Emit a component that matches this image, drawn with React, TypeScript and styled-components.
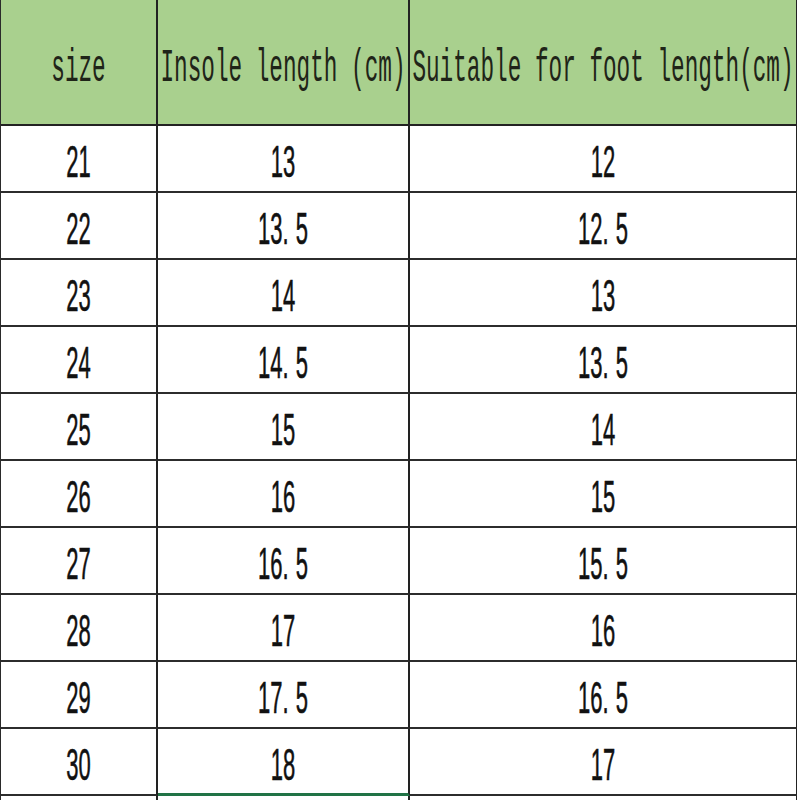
import styled, { createGlobalStyle } from "styled-components"

const GlobalStyle = createGlobalStyle`
    html, body {
        margin: 0;
        padding: 0;
        background: #fff;
        overflow: hidden;
    }
`

const rows = [
    ['21', '13', '12'],
    ['22', '13.5', '12.5'],
    ['23', '14', '13'],
    ['24', '14.5', '13.5'],
    ['25', '15', '14'],
    ['26', '16', '15'],
    ['27', '16.5', '15.5'],
    ['28', '17', '16'],
    ['29', '17.5', '16.5'],
    ['30', '18', '17'],
]

// the sheet font leaves a wide gap after the decimal point
const NumberText = ({ value }: { value: string }) => {
    const [whole, fraction] = value.split('.')
    return (
        <StyledNumber>
            {whole}
            {fraction !== undefined && <><StyledDot>.</StyledDot>{fraction}</>}
        </StyledNumber>
    )
}

export default function App() {
    return (
        <>
            <GlobalStyle />
            <StyledSheet>
                <StyledHeadCell><StyledHeadText>size</StyledHeadText></StyledHeadCell>
                <StyledHeadCell><StyledHeadText>Insole length (cm)</StyledHeadText></StyledHeadCell>
                <StyledHeadCell><StyledHeadText>Suitable for foot length(cm)</StyledHeadText></StyledHeadCell>
                {rows.map((row, i) =>
                    row.map((value, j) => (
                        <StyledCell key={i + '-' + j} selected={i === rows.length - 1 && j === 1}>
                            <NumberText value={value} />
                        </StyledCell>
                    ))
                )}
                <StyledCell />
                <StyledCell />
                <StyledCell />
            </StyledSheet>
        </>
    )
}

const StyledSheet = styled.div`
    display: grid;
    grid-template-columns: 157px 252px 388px;
    grid-template-rows: 126px;
    grid-auto-rows: 67px;
    width: 797px;
    height: 800px;
    overflow: hidden;
    border-left: 1px solid #2a2a2a;
    box-sizing: border-box;
`

const StyledHeadCell = styled.div`
    display: flex;
    align-items: center;
    justify-content: center;
    background: #a9d08e;
    border-right: 2px solid #222;
    border-bottom: 2px solid #222;
    box-sizing: border-box;
    white-space: nowrap;
`

const StyledHeadText = styled.span`
    display: inline-block;
    font-family: "Liberation Mono", monospace;
    font-size: 22.7px;
    color: #1f2418;
    transform: scaleY(2.05);
    margin-top: 14px;
`

const StyledCell = styled.div<{ selected?: boolean }>`
    display: flex;
    align-items: center;
    justify-content: center;
    background: #fff;
    border-right: 2px solid #222;
    border-bottom: ${props => props.selected ? '3px solid #217346' : '2px solid #2c2c2c'};
    box-sizing: border-box;
`

const StyledNumber = styled.span`
    display: inline-block;
    font-family: "Liberation Sans", Arial, sans-serif;
    font-size: 22px;
    color: #111;
    transform: scaleY(2.05);
    margin-top: 9px;
    -webkit-text-stroke: 0.3px #111;
`

const StyledDot = styled.span`
    margin-right: 7px;
`
